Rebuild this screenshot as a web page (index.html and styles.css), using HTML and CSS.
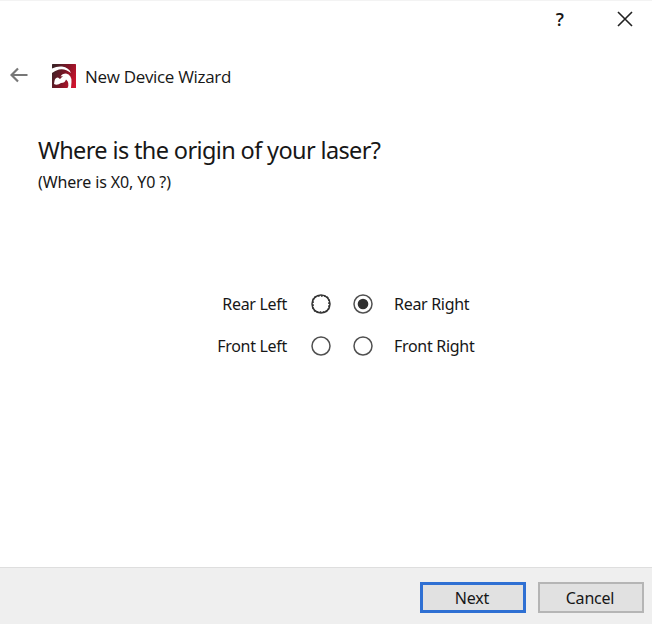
FILE: index.html
```html
<!DOCTYPE html>
<html lang="en">
<head>
<meta charset="utf-8">
<title>New Device Wizard</title>
<link rel="stylesheet" href="styles.css">
</head>
<body>
<div class="dialog">
  <div class="titlebar">
    <span class="help">?</span>
    <svg class="close" width="16" height="16" viewBox="0 0 16 16"><path d="M1 1L15 15M15 1L1 15"/></svg>
  </div>
  <header class="header">
    <svg class="back" width="18" height="16" viewBox="0 0 18 16"><path d="M17.5 8H2M8 1.5L1.5 8L8 14.5"/></svg>
    <svg class="logo" width="24" height="24" viewBox="0 0 24 24">
      <defs><linearGradient id="red" x1="0" y1="0.3" x2="1" y2="0.7"><stop offset="0" stop-color="#3d2226"/><stop offset="0.5" stop-color="#7d1526"/><stop offset="1" stop-color="#d0142e"/></linearGradient></defs>
      <rect width="24" height="24" rx="0.5" fill="url(#red)"/>
      <path fill="#fff" d="M0 4.500Q5 2 10 2.500Q17 3.500 19 9Q13 4 7 5.500Q3 6.500 0 9Z"/>
      <path fill="#fff" d="M2.500 17Q3 13.500 6 13.500L8 15L11 12L8.500 12.500Q10 9.500 14 9.500Q20 11 19.500 18L19 24H15.500Q18 19 14 15.500Q13 19 9 19Q5 22 2 20Z"/>
    </svg>
    <span class="name">New Device Wizard</span>
  </header>
  <main class="page">
    <h1 class="question">Where is the origin of your laser?</h1>
    <p class="hint">(Where is X0, Y0 ?)</p>
    <div class="origins">
      <span class="label">Rear Left</span>
      <svg class="radio" width="20" height="20" viewBox="0 0 20 20"><circle class="ring strong" cx="10" cy="10" r="9"/><rect class="focus" x="2" y="2" width="16" height="16" rx="5"/></svg>
      <svg class="radio" width="20" height="20" viewBox="0 0 20 20"><circle class="ring" cx="10" cy="10" r="9"/><circle class="dot" cx="10" cy="10" r="5.300"/></svg>
      <span class="label right">Rear Right</span>
      <span class="label">Front Left</span>
      <svg class="radio" width="20" height="20" viewBox="0 0 20 20"><circle class="ring" cx="10" cy="10" r="9"/></svg>
      <svg class="radio" width="20" height="20" viewBox="0 0 20 20"><circle class="ring" cx="10" cy="10" r="9"/></svg>
      <span class="label right">Front Right</span>
    </div>
  </main>
  <footer class="footer">
    <button class="btn primary">Next</button>
    <button class="btn">Cancel</button>
  </footer>
</div>
</body>
</html>
```
FILE: styles.css
```css
* { box-sizing: border-box; }
body { margin: 0; background: #fff; color: #171717; font-family: "Noto Sans", "Open Sans", sans-serif; font-size: 16px; }
.dialog { width: 652px; height: 624px; display: flex; flex-direction: column; border-top: 1px solid #f3f3f3; overflow: hidden; white-space: nowrap; }
.titlebar { height: 37px; display: flex; align-items: center; justify-content: flex-end; gap: 53px; padding: 0 19px 2px 0; }
.help { font-family: "Open Sans", sans-serif; font-size: 18px; font-weight: 600; line-height: 20px; }
.close path { fill: none; stroke: #222; stroke-width: 1.6; }
.header { height: 76px; display: flex; align-items: center; padding-left: 10px; }
.back { margin-bottom: 3px; }
.back path { fill: none; stroke: #777; stroke-width: 2.2; }
.logo { margin-left: 24px; }
.name { margin-left: 9px; padding-top: 2px; font-family: "Open Sans", sans-serif; font-size: 17px; line-height: 24px; letter-spacing: -0.32px; }
.page { flex: 1; padding: 20px 38px 0; }
.question { margin: 0; font-size: 23.5px; font-weight: 400; line-height: 32px; letter-spacing: -0.63px; }
.hint { margin: 4px 0 0; font-size: 16px; line-height: 24px; letter-spacing: -0.12px; }
.origins { display: grid; grid-template-columns: 251px 20px 20px auto; grid-auto-rows: 42px; column-gap: 22px; align-items: center; margin-top: 89px; }
.label { padding-right: 2px; line-height: 24px; text-align: right; letter-spacing: -0.3px; }
.right { margin-left: -1px; padding: 0; text-align: left; }
.radio { margin-bottom: 1px; }
.ring { fill: #fff; stroke: #505050; stroke-width: 1.5; }
.strong { stroke: #333; }
.dot { fill: #303030; }
.focus { fill: none; stroke: #333; stroke-width: 1.6; stroke-dasharray: 1.6 1.4; }
.footer { height: 57px; display: flex; justify-content: flex-end; gap: 12px; padding: 14px 8px 0 0; border-top: 1px solid #dedede; background: #efefef; }
.btn { width: 106px; height: 31px; padding: 0 2px 0 0; border: 2px solid #b5b5b5; background: #e1e1e1; color: #171717; font: 16px/26px "Noto Sans", sans-serif; letter-spacing: -0.2px; }
.primary { border: 3px solid #2f70d3; }
```
